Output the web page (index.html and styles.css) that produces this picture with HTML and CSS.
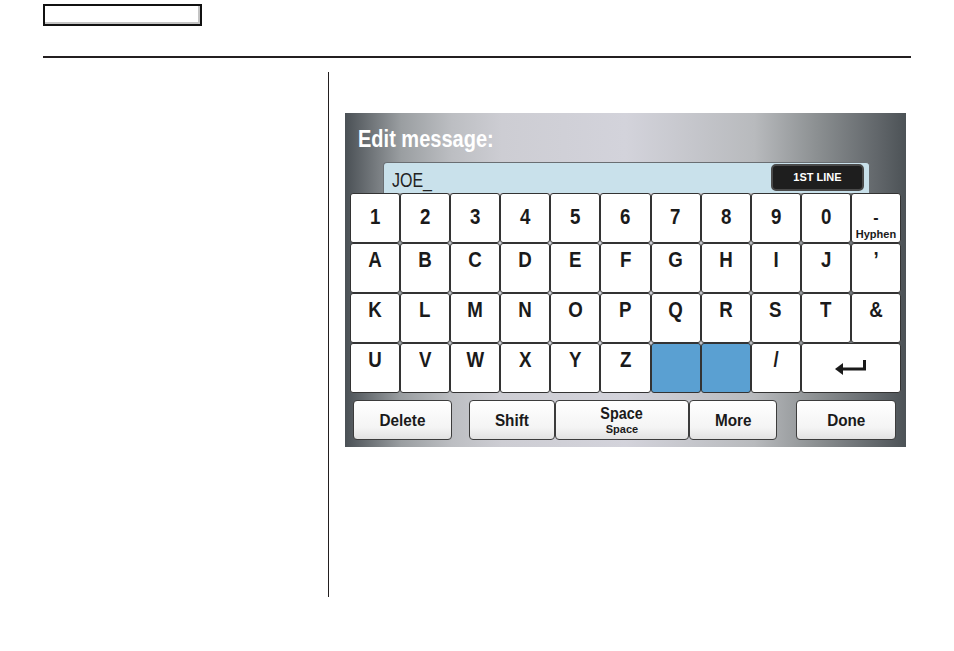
FILE: index.html
```html
<!DOCTYPE html>
<html lang="en">
<head>
    <meta charset="UTF-8">
    <meta name="viewport" content="width=device-width, initial-scale=1.0">
    <title>Edit Message</title>
    <link rel="stylesheet" href="styles.css">
</head>
<body>
    <div class="page">
        <div class="tab"></div>
        <div class="rule"></div>

        <div class="content">
            <div class="side"></div>

            <div class="main">
                <!-- Navigation screen -->
                <div class="screen">
                    <div class="screen-title"><span>Edit message:</span></div>

                    <div class="entry">
                        <span class="entry-text">JOE_</span>
                        <div class="line-btn">1ST LINE</div>
                    </div>

                    <div class="keys">
                        <div class="key key--digit"><span>1</span></div>
                        <div class="key key--digit"><span>2</span></div>
                        <div class="key key--digit"><span>3</span></div>
                        <div class="key key--digit"><span>4</span></div>
                        <div class="key key--digit"><span>5</span></div>
                        <div class="key key--digit"><span>6</span></div>
                        <div class="key key--digit"><span>7</span></div>
                        <div class="key key--digit"><span>8</span></div>
                        <div class="key key--digit"><span>9</span></div>
                        <div class="key key--digit"><span>0</span></div>
                        <div class="key key--hyphen"><span class="dash">-</span><span class="small">Hyphen</span></div>

                        <div class="key"><span>A</span></div>
                        <div class="key"><span>B</span></div>
                        <div class="key"><span>C</span></div>
                        <div class="key"><span>D</span></div>
                        <div class="key"><span>E</span></div>
                        <div class="key"><span>F</span></div>
                        <div class="key"><span>G</span></div>
                        <div class="key"><span>H</span></div>
                        <div class="key"><span>I</span></div>
                        <div class="key"><span>J</span></div>
                        <div class="key"><span>&rsquo;</span></div>

                        <div class="key"><span>K</span></div>
                        <div class="key"><span>L</span></div>
                        <div class="key"><span>M</span></div>
                        <div class="key"><span>N</span></div>
                        <div class="key"><span>O</span></div>
                        <div class="key"><span>P</span></div>
                        <div class="key"><span>Q</span></div>
                        <div class="key"><span>R</span></div>
                        <div class="key"><span>S</span></div>
                        <div class="key"><span>T</span></div>
                        <div class="key"><span>&amp;</span></div>

                        <div class="key"><span>U</span></div>
                        <div class="key"><span>V</span></div>
                        <div class="key"><span>W</span></div>
                        <div class="key"><span>X</span></div>
                        <div class="key"><span>Y</span></div>
                        <div class="key"><span>Z</span></div>
                        <div class="key key--blank"></div>
                        <div class="key key--blank"></div>
                        <div class="key"><span>/</span></div>
                        <div class="key key--enter">
                            <svg width="32" height="18" viewBox="0 0 32 18">
                                <polygon points="0,10 8,4 8,16" fill="#1a1a1a"/>
                                <path d="M7 10 H29.5 V1" fill="none" stroke="#1a1a1a" stroke-width="3"/>
                            </svg>
                        </div>
                    </div>

                    <!-- Bottom buttons -->
                    <div class="actions">
                        <div class="btn btn--delete"><span>Delete</span></div>
                        <div class="btn-group">
                            <div class="btn btn--shift"><span>Shift</span></div>
                            <div class="btn btn--space"><span>Space</span><span class="small">Space</span></div>
                            <div class="btn btn--more"><span>More</span></div>
                        </div>
                        <div class="btn btn--done"><span>Done</span></div>
                    </div>
                </div>
            </div>
        </div>
    </div>
</body>
</html>
```

FILE: styles.css
```css
/* General Styles */
* {
    box-sizing: border-box;
    margin: 0;
    padding: 0;
}
body {
    background-color: #ffffff;
    font-family: "Liberation Sans", Arial, sans-serif;
    color: #1a1a1a;
}

/* Page frame */
.page {
    padding-left: 43px;
    width: 911px;
}
.tab {
    margin-top: 4px;
    width: 159px;
    height: 22px;
    border: 2px solid #111;
    box-shadow: inset -2px -2px 0 #c4c4c4;
}
.rule {
    margin-top: 30px;
    height: 2px;
    background-color: #231f20;
}
.content {
    display: flex;
    margin-top: 14px;
}
.side {
    width: 285px;
}
.main {
    height: 525px;
    border-left: 1px solid #231f20;
    padding: 41px 0 0 16px;
}

/* Screen */
.screen {
    width: 561px;
    height: 334px;
    background: linear-gradient(90deg, #4a5055 0%, #9a9ea1 10%, #bcbec2 19%, #cdcdd3 28%, #d3d3db 50%, #b8babd 73%, #8c9092 84%, #61666a 95%, #4c5256 100%);
}
.screen-title {
    height: 49px;
    padding: 15px 0 0 13px;
    color: #ffffff;
    font-size: 23px;
    line-height: 23px;
    font-weight: bold;
}
.screen-title span {
    display: inline-block;
    transform: scaleX(0.87);
    transform-origin: left;
}

/* Entry field */
.entry {
    display: flex;
    justify-content: space-between;
    margin-left: 38px;
    width: 487px;
    height: 31px;
    padding: 1px 5px 0 8px;
    background-color: #c9e1eb;
    border: 1px solid #6a6e72;
    border-bottom: none;
    border-radius: 4px 4px 0 0;
}
.entry-text {
    display: inline-block;
    padding-top: 6px;
    font-size: 20px;
    line-height: 20px;
    color: #222;
    transform: scaleX(0.8);
    transform-origin: left;
}
.line-btn {
    width: 93px;
    height: 27px;
    background-color: #1e1e1e;
    border: 2px solid #4a4a4a;
    border-radius: 5px;
    color: #ffffff;
    font-size: 11px;
    font-weight: bold;
    line-height: 23px;
    text-align: center;
}

/* Keys */
.keys {
    display: grid;
    grid-template-columns: repeat(11, 1fr);
    grid-auto-rows: 50px;
    margin-left: 5px;
    width: 551px;
}
.key {
    background-color: #ffffff;
    border: 1px solid #333;
    border-radius: 3px;
    padding-top: 5px;
    text-align: center;
    font-size: 22px;
    line-height: 22px;
    font-weight: bold;
}
.key span {
    display: inline-block;
    transform: scaleX(0.85);
}
.key--digit {
    padding-top: 12px;
}
.key--hyphen {
    display: flex;
    flex-direction: column;
    align-items: center;
    padding-top: 16px;
}
.key--hyphen .dash {
    font-size: 16px;
    line-height: 16px;
    height: 16px;
    transform: none;
}
.key .small {
    margin-top: 2px;
    font-size: 11px;
    line-height: 12px;
    transform: none;
}
.key--blank {
    background-color: #5aa0d2;
}
.key--enter {
    grid-column: span 2;
    padding-top: 15px;
}

/* Bottom buttons */
.actions {
    display: flex;
    margin: 7px 0 0 8px;
    height: 40px;
}
.btn-group {
    display: flex;
    margin-left: 17px;
}
.btn {
    display: flex;
    flex-direction: column;
    justify-content: center;
    align-items: center;
    height: 40px;
    background: linear-gradient(#ffffff, #f4f4f4 70%, #e2e2e2);
    border: 1px solid #3c3c3c;
    border-radius: 4px;
    font-size: 17px;
    font-weight: bold;
    line-height: 17px;
}
.btn span {
    display: inline-block;
    transform: scaleX(0.9);
}
.btn--delete { width: 99px; }
.btn--shift { width: 86px; }
.btn--space { width: 134px; }
.btn--more { width: 88px; }
.btn--done {
    width: 100px;
    margin-left: 19px;
}
.btn--space span:first-child {
    font-size: 16px;
    line-height: 16px;
    padding-top: 1px;
}
.btn .small {
    font-size: 11px;
    line-height: 14px;
    transform: none;
}
```
